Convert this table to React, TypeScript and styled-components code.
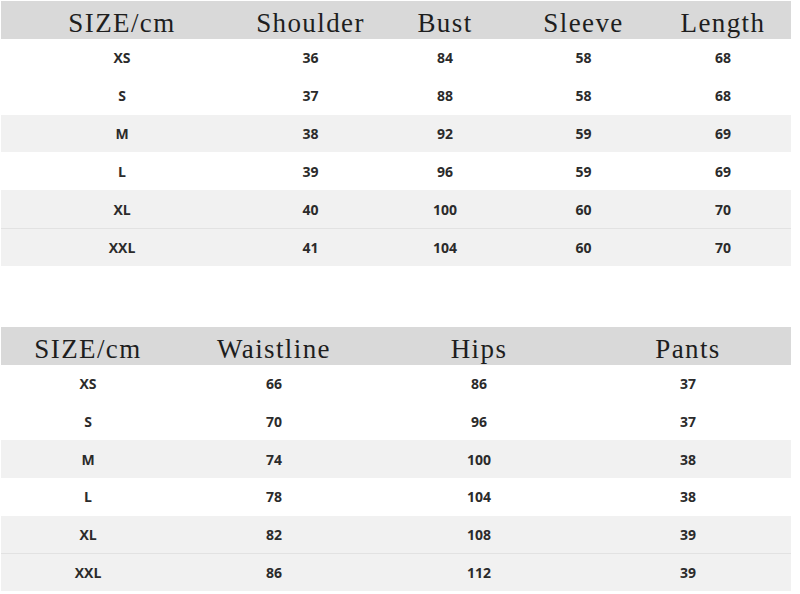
import React from "react";
import styled, { createGlobalStyle } from "styled-components";

const Global = createGlobalStyle`
  html, body { margin: 0; padding: 0; background: #ffffff; }
  body { width: 800px; height: 594px; overflow: hidden; }
`;

const Page = styled.div`
  width: 800px;
  height: 594px;
  display: flex;
  flex-direction: column;
  padding-top: 1px;
  box-sizing: border-box;
`;

const Table = styled.div<{ $cols: string }>`
  width: 790px;
  margin-left: 1px;
  display: grid;
  grid-template-columns: ${(p) => p.$cols};
`;

const Spacer = styled.div`
  height: 61px;
`;

const HeadCell = styled.div`
  height: 38px;
  background: #d9d9d9;
  display: flex;
  align-items: center;
  justify-content: center;
  font-family: "Liberation Serif", "DejaVu Serif", serif;
  font-size: 27px;
  letter-spacing: 1.4px;
  color: #1e1e1e;
  padding-top: 7px;
  box-sizing: border-box;
`;

const Cell = styled.div<{ $shade: boolean; $h: number; $line: boolean }>`
  height: ${(p) => p.$h}px;
  background: ${(p) => (p.$shade ? "#f1f1f1" : "#ffffff")};
  border-top: ${(p) => (p.$line ? "1px solid #e2e2e2" : "none")};
  box-sizing: border-box;
  display: flex;
  align-items: center;
  justify-content: center;
  font-family: "Open Sans", "Noto Sans", Arial, sans-serif;
  font-weight: 700;
  font-size: 14px;
  color: #2b2b2b;
`;

type TableData = {
  cols: string;
  head: string[];
  rows: string[][];
  rowH: number;
};

const shaded = [false, false, true, false, true, true];

const SizeTable: React.FC<TableData> = ({ cols, head, rows, rowH }) => (
  <Table $cols={cols}>
    {head.map((h) => (
      <HeadCell key={h}>{h}</HeadCell>
    ))}
    {rows.map((r, i) =>
      r.map((v, j) => (
        <Cell
          key={`${i}-${j}`}
          $shade={shaded[i]}
          $h={rowH}
          $line={i === 5}
        >
          {v}
        </Cell>
      ))
    )}
  </Table>
);

const top: TableData = {
  cols: "242px 135px 134px 143px 136px",
  head: ["SIZE/cm", "Shoulder", "Bust", "Sleeve", "Length"],
  rows: [
    ["XS", "36", "84", "58", "68"],
    ["S", "37", "88", "58", "68"],
    ["M", "38", "92", "59", "69"],
    ["L", "39", "96", "59", "69"],
    ["XL", "40", "100", "60", "70"],
    ["XXL", "41", "104", "60", "70"],
  ],
  rowH: 37.8,
};

const bottom: TableData = {
  cols: "174px 198px 212px 206px",
  head: ["SIZE/cm", "Waistline", "Hips", "Pants"],
  rows: [
    ["XS", "66", "86", "37"],
    ["S", "70", "96", "37"],
    ["M", "74", "100", "38"],
    ["L", "78", "104", "38"],
    ["XL", "82", "108", "39"],
    ["XXL", "86", "112", "39"],
  ],
  rowH: 37.7,
};

export default function App() {
  return (
    <>
      <Global />
      <Page>
        <SizeTable {...top} />
        <Spacer />
        <SizeTable {...bottom} />
      </Page>
    </>
  );
}
